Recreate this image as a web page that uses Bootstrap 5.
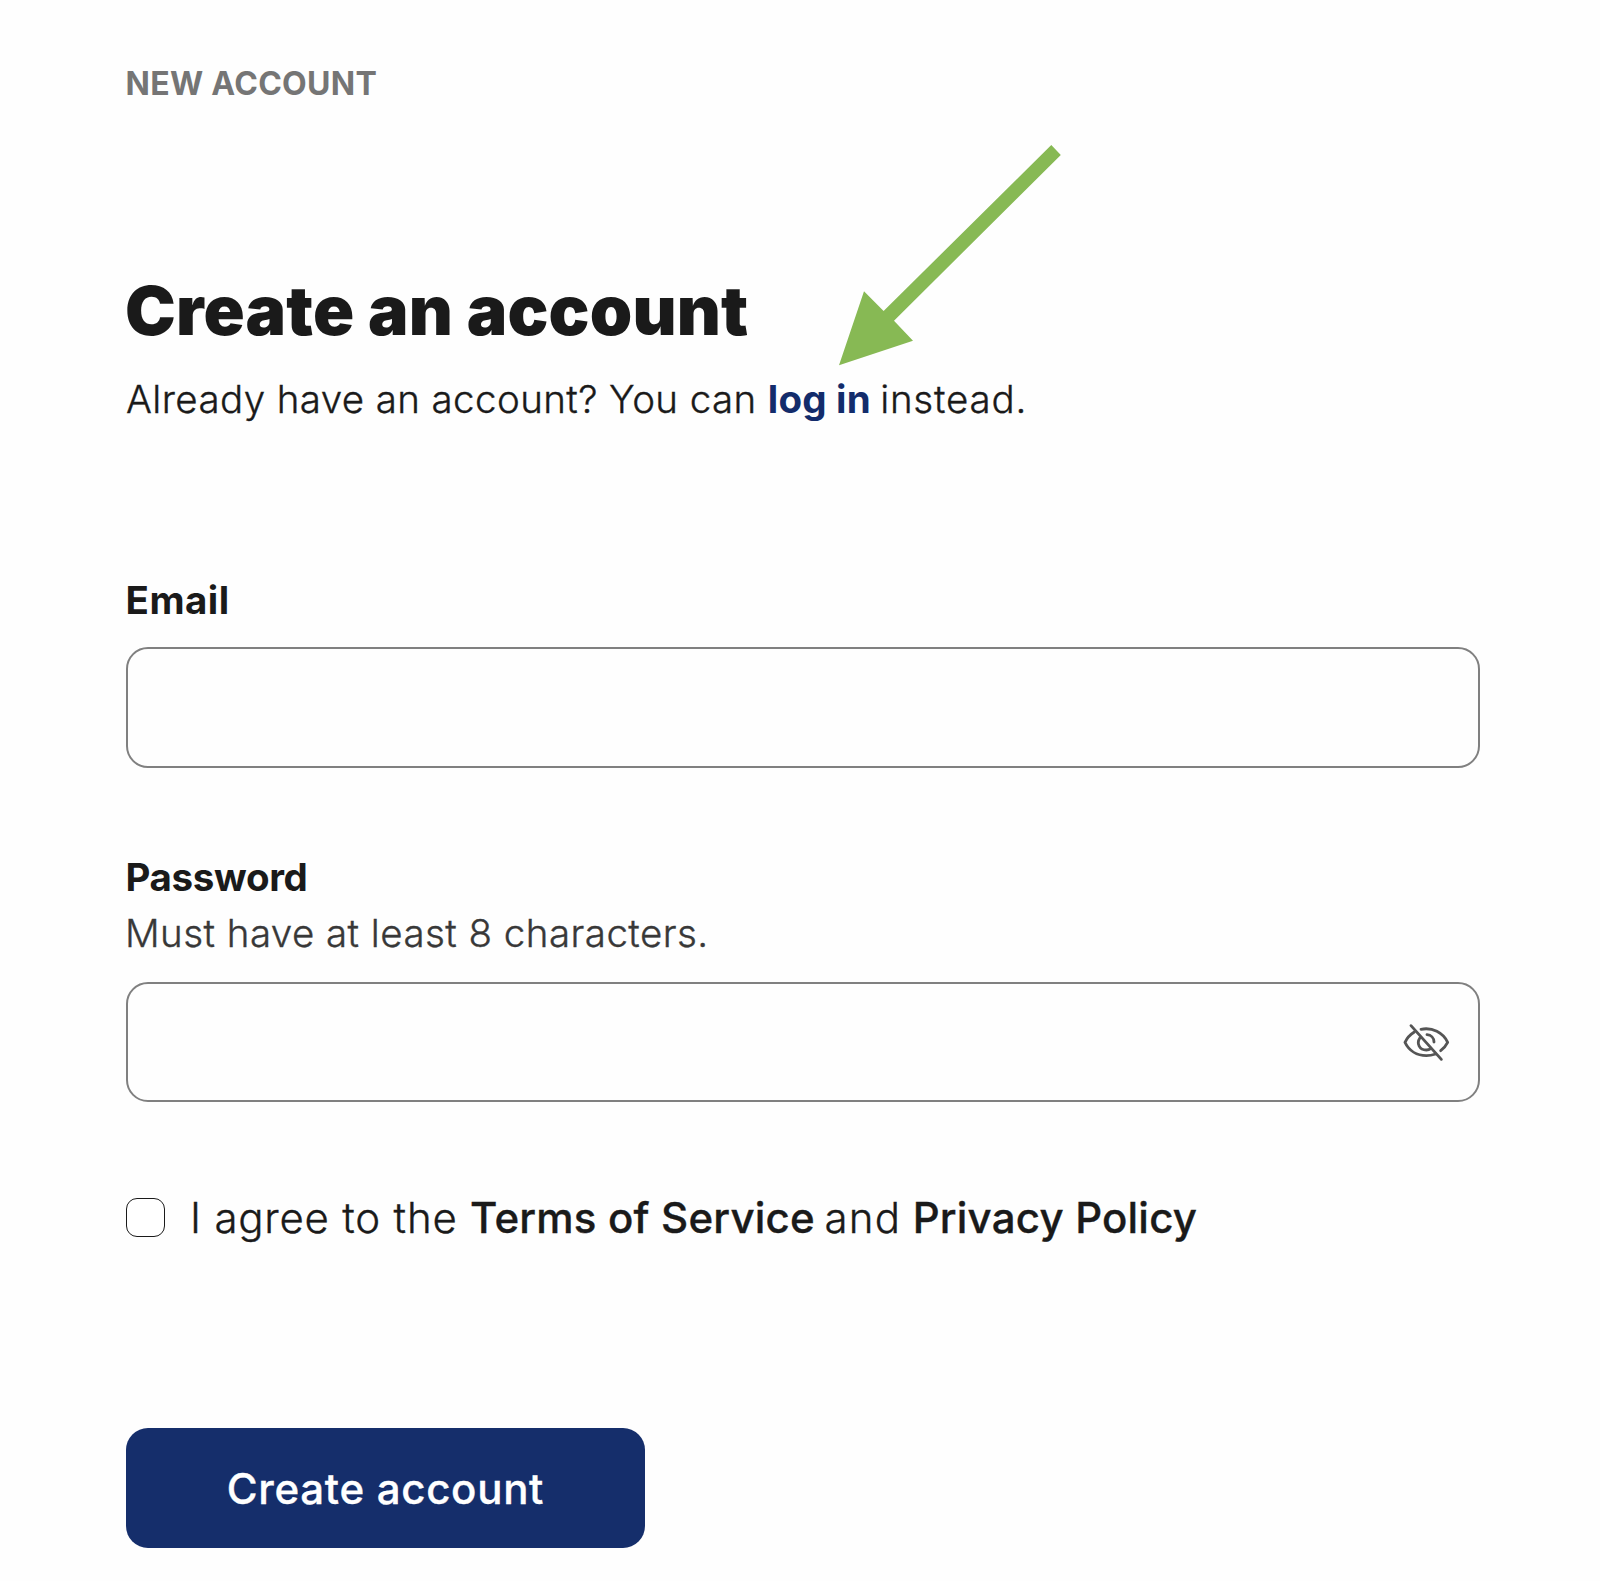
<!DOCTYPE html>
<html lang="en">
<head>
<meta charset="utf-8">
<meta name="viewport" content="width=device-width, initial-scale=1">
<title>Create an account</title>
<link href="https://cdn.jsdelivr.net/npm/bootstrap@5.3.0/dist/css/bootstrap.min.css" rel="stylesheet">
<style>
  body { font-family: Inter, "Liberation Sans", sans-serif; color: #1a1a1a; background: #fefefe; }
  .signup { width: 1480px; padding: 64px 0 0 126px; }
  .eyebrow { font-size: 32px; line-height: 40px; font-weight: 700; letter-spacing: .3px; color: #757575; margin: 0 0 166px -.5px; }
  .headline { font-size: 68px; line-height: 80px; font-weight: 900; letter-spacing: .15px; margin: 0 0 25px -1px; }
  .copy { font-size: 38.5px; line-height: 48px; font-weight: 300; letter-spacing: .4px; white-space: nowrap; -webkit-text-stroke: .35px currentColor; }
  .login-link { color: #132c6b; font-weight: 700; letter-spacing: .2px; -webkit-text-stroke: 0; }
  .after-login { letter-spacing: .8px; margin-left: -2px; }
  .intro { margin-bottom: 153px; }
  .field-label { font-size: 38.5px; line-height: 48px; font-weight: 700; margin-left: -.5px; }
  .email-label { letter-spacing: .5px; margin-bottom: 23px; }
  .password-label { letter-spacing: -.35px; }
  .email-group { margin-bottom: 85px; }
  .password-group { margin-bottom: 91px; }
  .field-box { height: 120.5px; border: 2px solid #808080; border-radius: 22px; background: #fefefe; }
  .hint { color: #383838; margin: 8px 0 25px -1px; letter-spacing: .45px; }
  .reveal { right: 30px; top: 41px; width: 47px; height: 39px; }
  .agree-row { margin-bottom: 185px; }
  .agree-box { width: 39px; height: 39px; border: 1.7px solid #1a1a1a; border-radius: 11px !important; margin: 5px 25px 0 0; }
  .agree-text { font-size: 42px; line-height: 50px; font-weight: 300; letter-spacing: .78px; white-space: nowrap; -webkit-text-stroke: .35px currentColor; }
  .agree-text a { font-weight: 500; letter-spacing: .2px; }
  .joiner { margin: 0 -1px 0 -3px; letter-spacing: 1.2px; }
  .submit { width: 519px; height: 120px; border-radius: 22px; background: #152e6b !important; font-size: 42px; font-weight: 500; letter-spacing: .7px; -webkit-text-stroke: .35px currentColor; }
  .pointer-arrow { left: 830px; top: 140px; }
</style>
<script src="https://cdn.jsdelivr.net/npm/bootstrap@5.3.0/dist/js/bootstrap.bundle.min.js"></script>
</head>
<body class="position-relative">
<main class="signup">
  <p class="eyebrow">NEW ACCOUNT</p>
  <h1 class="headline">Create an account</h1>
  <p class="copy intro">Already have an account? You can <a href="#" class="login-link text-decoration-none">log in</a> <span class="after-login">instead.</span></p>
  <form>
    <div class="email-group">
      <label for="email" class="field-label email-label d-block">Email</label>
      <input id="email" type="email" class="form-control field-box">
    </div>
    <div class="password-group">
      <label for="password" class="field-label password-label d-block">Password</label>
      <div class="copy hint">Must have at least 8 characters.</div>
      <div class="position-relative">
        <input id="password" type="password" class="form-control field-box">
        <button type="button" class="reveal btn p-0 border-0 position-absolute d-flex" aria-label="Show password">
          <svg width="47" height="39" viewBox="70 70 141 117" fill="none" stroke="#555" stroke-width="8.5" stroke-linecap="round" stroke-linejoin="round">
            <path d="M94 78L185 179"/>
            <path d="M104 97C91 105 82 115 76 128C88 153 112 168 140 168C150 168 159 166 168 163"/>
            <path d="M124 89C158 82 190 99 204 128C199 138 192 146 183 153"/>
            <path d="M121 114C109 132 120 151 140 151C145 151 149 150 153 147"/>
            <path d="M142 105C154 106 163 115 163 127"/>
          </svg>
        </button>
      </div>
    </div>
    <div class="agree-row d-flex">
      <input id="agree" type="checkbox" class="form-check-input agree-box flex-shrink-0">
      <label for="agree" class="agree-text">I agree to the <a href="#" class="text-reset text-decoration-none">Terms of Service</a> <span class="joiner">and</span> <a href="#" class="text-reset text-decoration-none">Privacy Policy</a></label>
    </div>
    <button type="button" class="btn btn-primary submit border-0">Create account</button>
  </form>
</main>
<svg class="pointer-arrow position-absolute" width="240" height="235" viewBox="830 140 240 235" aria-hidden="true">
  <path fill="#87b954" d="M839 365.3L864 291.3L883.6 311L1051.3 145L1060.8 155L894 320.7L913 340.7Z"/>
</svg>
</body>
</html>
